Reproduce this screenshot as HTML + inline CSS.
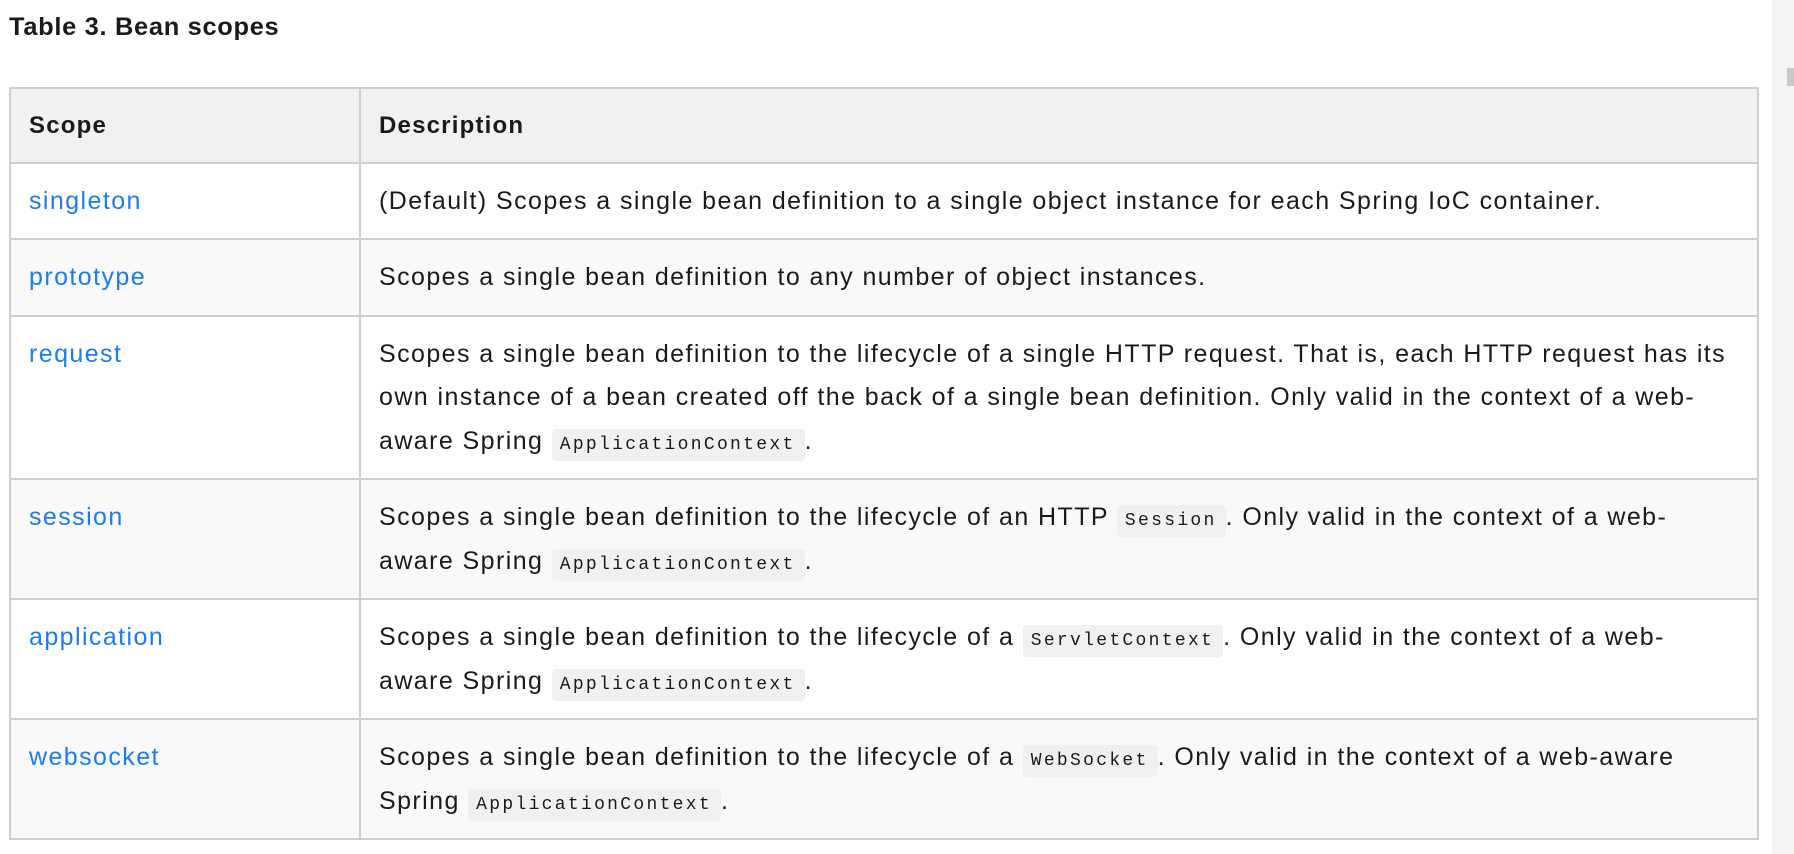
<!DOCTYPE html>
<html><head><meta charset="utf-8"><style>
html,body{margin:0;padding:0;background:#fff;width:1794px;height:854px;overflow:hidden;font-family:"Liberation Sans",sans-serif;color:#1a1a1a}
.title{position:absolute;left:9px;top:13px;font-weight:bold;font-size:25.4px;letter-spacing:0.7px}
table{position:absolute;left:9px;top:87px;width:1750px;border-collapse:collapse;font-size:25px;letter-spacing:1.42px}
td,th{border:2px solid #cfcfcf;padding:16px 18px 15px 18px;line-height:43.5px;text-align:left;vertical-align:top}
th{background:#f1f1f1;font-weight:bold;padding-top:15px;padding-bottom:14px;font-size:24px;letter-spacing:1.2px}
td:first-child,th:first-child{width:312px}
tr:nth-child(odd) td{background:#f9f9f9}
a{color:#1b7cf0;text-decoration:none}
code{font-family:"Liberation Mono",monospace;font-size:18px;line-height:1;letter-spacing:2.3px;background:#f0f0f0;padding:6px 9px 6px 8px;border-radius:4px}
.sb{position:absolute;left:1772px;top:0;width:22px;height:854px;background:#f4f4f4}
.th{position:absolute;left:1787px;top:68px;width:7px;height:18px;background:#c8c8c8}
</style></head><body>
<div class="title">Table 3. Bean scopes</div>
<table>
<tr><th>Scope</th><th>Description</th></tr>
<tr><td><a>singleton</a></td><td>(Default) Scopes a single bean definition to a single object instance for each Spring IoC container.</td></tr>
<tr><td><a>prototype</a></td><td>Scopes a single bean definition to any number of object instances.</td></tr>
<tr><td><a>request</a></td><td>Scopes a single bean definition to the lifecycle of a single HTTP request. That is, each HTTP request has its own instance of a bean created off the back of a single bean definition. Only valid in the context of a web-aware Spring <code>ApplicationContext</code>.</td></tr>
<tr><td><a>session</a></td><td>Scopes a single bean definition to the lifecycle of an HTTP <code>Session</code>. Only valid in the context of a web-<br>aware Spring <code>ApplicationContext</code>.</td></tr>
<tr><td><a>application</a></td><td>Scopes a single bean definition to the lifecycle of a <code>ServletContext</code>. Only valid in the context of a web-<br>aware Spring <code>ApplicationContext</code>.</td></tr>
<tr><td><a>websocket</a></td><td>Scopes a single bean definition to the lifecycle of a <code>WebSocket</code>. Only valid in the context of a web-aware<br>Spring <code>ApplicationContext</code>.</td></tr>
</table>
<div class="sb"></div><div class="th"></div>
</body></html>
